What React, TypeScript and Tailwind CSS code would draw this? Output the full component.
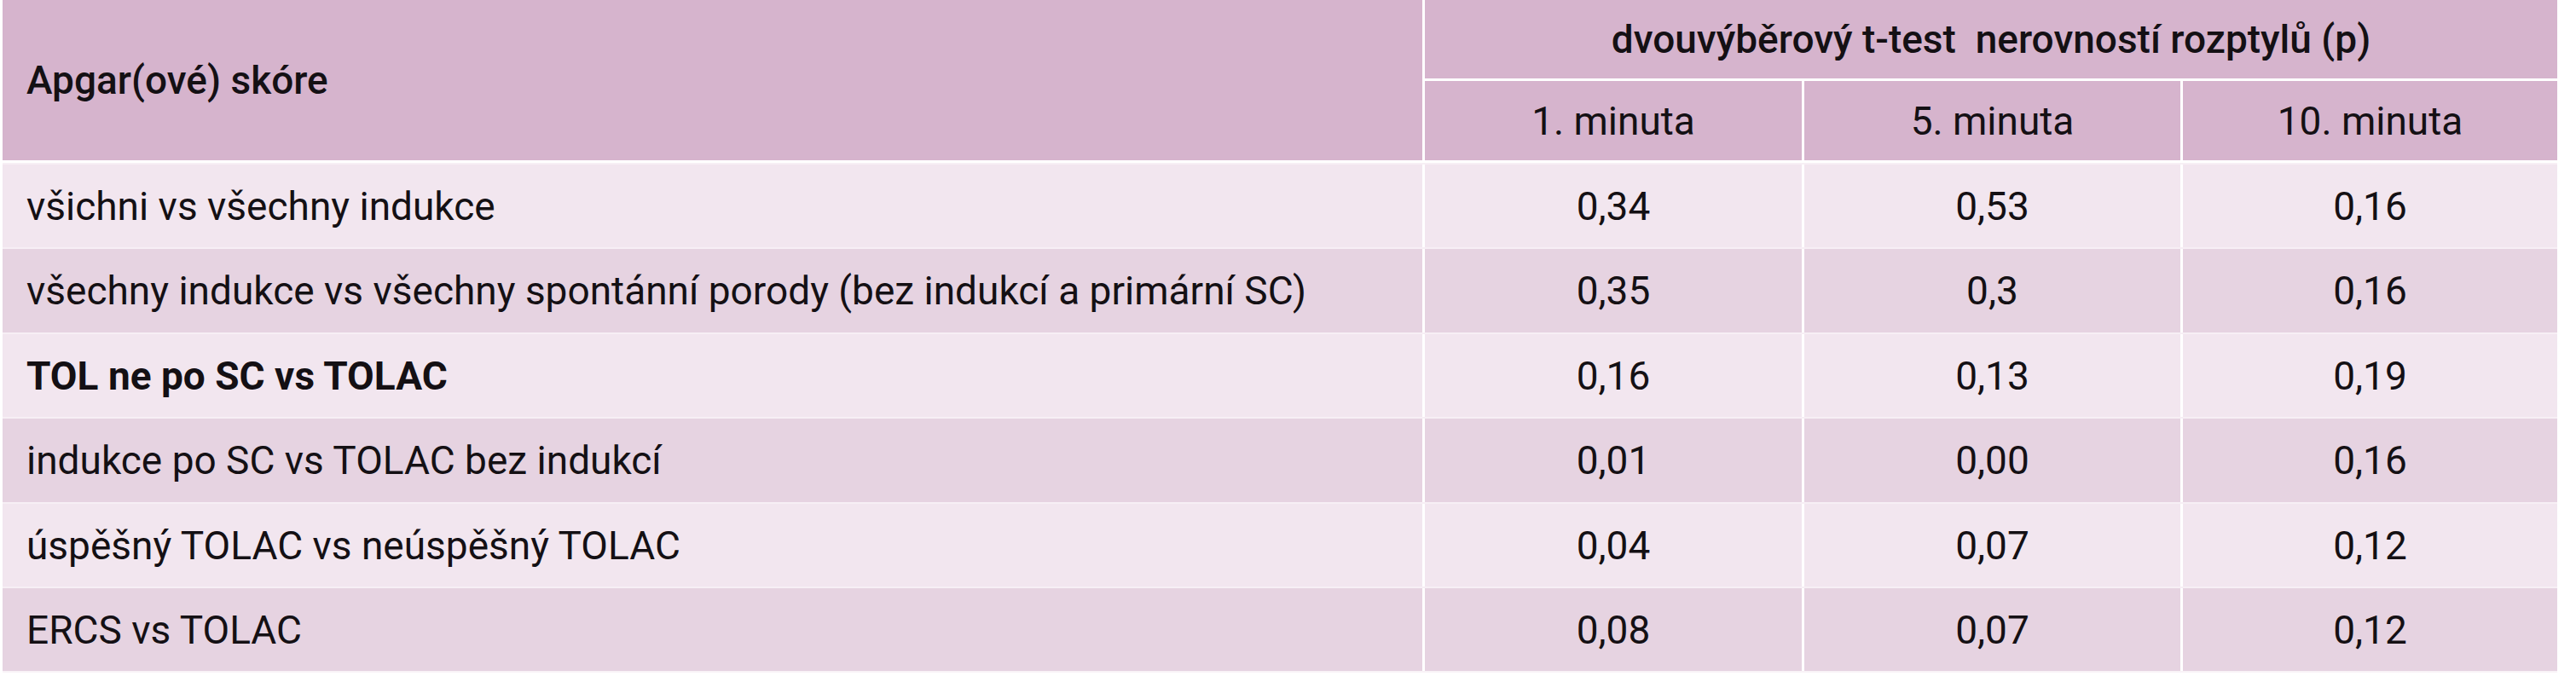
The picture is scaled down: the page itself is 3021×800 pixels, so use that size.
import React from "react";

const rows: { label: string; bold?: boolean; v: [string, string, string]; bg: string; h: string }[] = [
  { label: "všichni vs všechny indukce", v: ["0,34", "0,53", "0,16"], bg: "bg-[#f2e6ef]", h: "h-[99px]" },
  { label: "všechny indukce vs všechny spontánní porody (bez indukcí a primární SC)", v: ["0,35", "0,3", "0,16"], bg: "bg-[#e6d3e1]", h: "h-[100px]" },
  { label: "TOL ne po SC vs TOLAC", bold: true, v: ["0,16", "0,13", "0,19"], bg: "bg-[#f2e6ef]", h: "h-[99px]" },
  { label: "indukce po SC vs TOLAC bez indukcí", v: ["0,01", "0,00", "0,16"], bg: "bg-[#e6d3e1]", h: "h-[100px]" },
  { label: "úspěšný TOLAC vs neúspěšný TOLAC", v: ["0,04", "0,07", "0,12"], bg: "bg-[#f2e6ef]", h: "h-[99px]" },
  { label: "ERCS vs TOLAC", v: ["0,08", "0,07", "0,12"], bg: "bg-[#e6d3e1]", h: "h-[99px]" },
];

export default function App() {
  return (
    <div
      className="w-[3021px] h-[800px] bg-white pl-[3px] text-[46px] text-[#141014] leading-none"
      style={{ fontFamily: "Roboto, 'Noto Sans', sans-serif" }}
    >
      <div className="w-[2996px]">
        <div className="grid grid-cols-[1665px_442px_441px_439px] grid-rows-[92px_93px] gap-[3px]">
          <div className="row-span-2 bg-[#d6b4cd] flex items-center pl-[28px] font-medium">
            Apgar(ové) skóre
          </div>
          <div className="col-span-3 bg-[#d6b4cd] flex items-center justify-center font-medium">
            dvouvýběrový t-test&nbsp; nerovností rozptylů (p)
          </div>
          <div className="bg-[#d6b4cd] flex items-center justify-center">1. minuta</div>
          <div className="bg-[#d6b4cd] flex items-center justify-center">5. minuta</div>
          <div className="bg-[#d6b4cd] flex items-center justify-center">10. minuta</div>
        </div>
        <div className="h-[3px]" />
        {rows.map((r, i) => (
          <div key={i} className={`border-t-2 border-[#f7eff5] ${r.h}`}>
            <div className="grid grid-cols-[1665px_442px_441px_439px] gap-x-[3px] h-full bg-white">
              <div className={`${r.bg} flex items-center pl-[28px] ${r.bold ? "font-bold" : ""}`}>{r.label}</div>
              {r.v.map((x, j) => (
                <div key={j} className={`${r.bg} flex items-center justify-center`}>
                  {x}
                </div>
              ))}
            </div>
          </div>
        ))}
        <div className="h-[2px] bg-[#f9f3f7]" />
      </div>
    </div>
  );
}
